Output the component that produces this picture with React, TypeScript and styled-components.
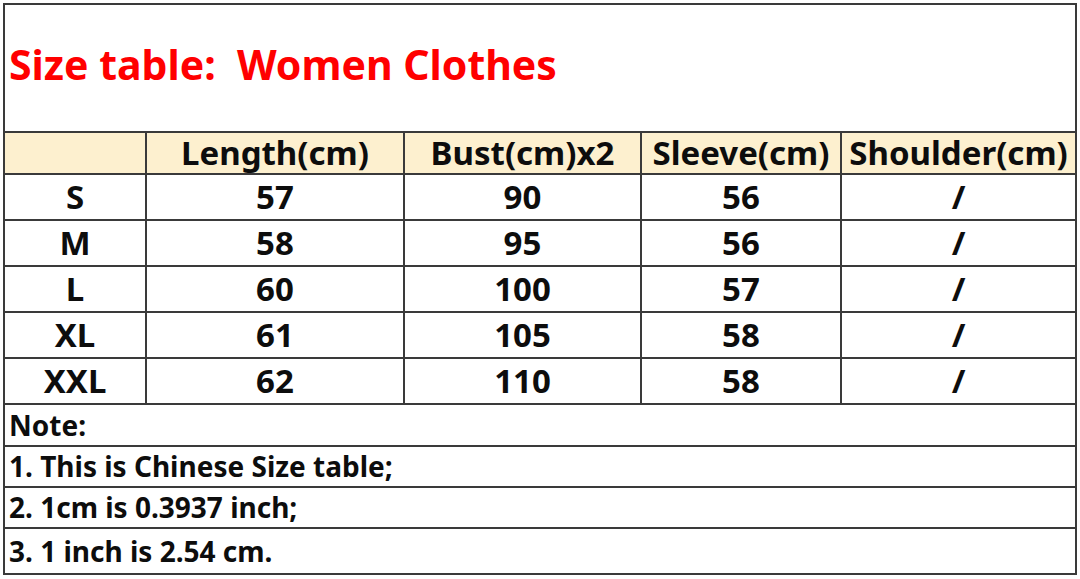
import React from "react";
import styled, { createGlobalStyle } from "styled-components";

const GlobalStyle = createGlobalStyle`
  html, body {
    margin: 0;
    padding: 0;
    background: #ffffff;
  }
  body {
    font-family: "Noto Sans", "Open Sans", "Liberation Sans", sans-serif;
  }
`;

const Page = styled.div`
  width: 1080px;
  height: 579px;
  padding: 3px 0 0 3px;
  box-sizing: border-box;
  overflow: hidden;
`;

const Table = styled.table`
  border-collapse: collapse;
  table-layout: fixed;
  width: 1072px;
  color: #0d0d0d;
  font-weight: 700;
`;

const TitleCell = styled.td`
  height: 118px;
  padding: 0 0 8px 4px;
  border: 2px solid #3a3a3a;
  color: #ff0000;
  font-size: 41px;
  text-align: left;
  vertical-align: middle;
  white-space: pre;
`;

const HeadCell = styled.th`
  height: 40px;
  padding: 0;
  border: 2px solid #3a3a3a;
  background: #fdf0cf;
  font-size: 33px;
  font-weight: 700;
  line-height: 40px;
  text-align: center;
  vertical-align: middle;
  white-space: nowrap;
`;

const Cell = styled.td`
  height: 44px;
  padding: 0;
  border: 2px solid #3a3a3a;
  font-size: 33px;
  line-height: 44px;
  text-align: center;
  vertical-align: middle;
`;

const NoteCell = styled.td<{ $h: number }>`
  height: ${(p) => p.$h}px;
  padding: 0 0 0 4px;
  border: 2px solid #3a3a3a;
  font-size: 28px;
  line-height: ${(p) => p.$h}px;
  text-align: left;
  vertical-align: middle;
  white-space: nowrap;
`;

const rows = [
  ["S", "57", "90", "56", "/"],
  ["M", "58", "95", "56", "/"],
  ["L", "60", "100", "57", "/"],
  ["XL", "61", "105", "58", "/"],
  ["XXL", "62", "110", "58", "/"],
];

const notes: [string, number][] = [
  ["Note:", 40],
  ["1. This is Chinese Size table;", 39],
  ["2. 1cm is 0.3937 inch;", 39],
  ["3. 1 inch is 2.54 cm.", 44],
];

const App = () => {
  return (
    <>
      <GlobalStyle />
      <Page>
        <Table>
          <colgroup>
            <col style={{ width: 142 }} />
            <col style={{ width: 258 }} />
            <col style={{ width: 237 }} />
            <col style={{ width: 200 }} />
            <col style={{ width: 235 }} />
          </colgroup>
          <tbody>
            <tr>
              <TitleCell colSpan={5}>Size table:  Women Clothes</TitleCell>
            </tr>
            <tr>
              <HeadCell />
              <HeadCell>Length(cm)</HeadCell>
              <HeadCell>Bust(cm)x2</HeadCell>
              <HeadCell>Sleeve(cm)</HeadCell>
              <HeadCell>Shoulder(cm)</HeadCell>
            </tr>
            {rows.map((r) => (
              <tr key={r[0]}>
                {r.map((v, i) => (
                  <Cell key={i}>{v}</Cell>
                ))}
              </tr>
            ))}
            {notes.map(([text, h]) => (
              <tr key={text}>
                <NoteCell colSpan={5} $h={h}>
                  {text}
                </NoteCell>
              </tr>
            ))}
          </tbody>
        </Table>
      </Page>
    </>
  );
};

export default App;
